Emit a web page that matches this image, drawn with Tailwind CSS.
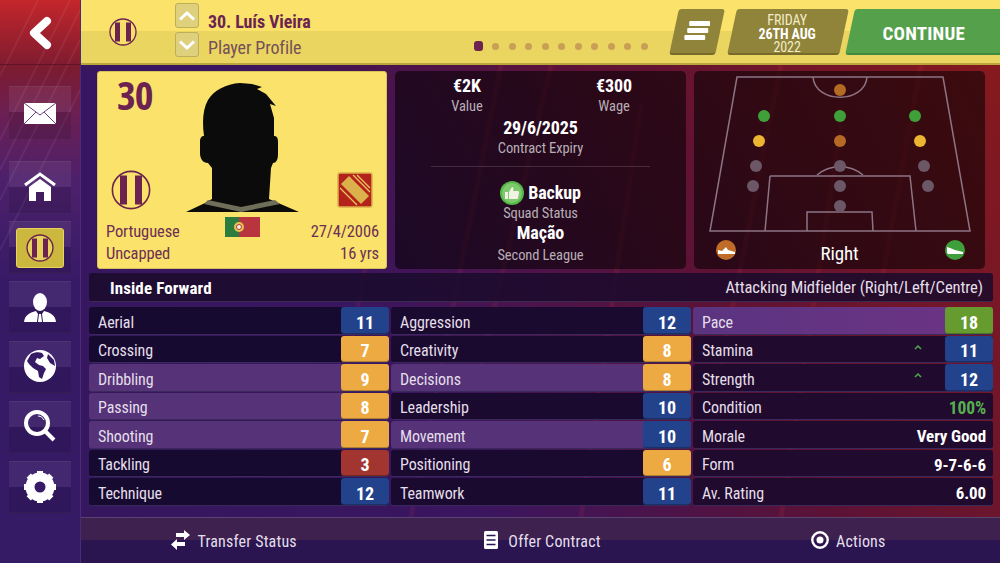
<!DOCTYPE html>
<html lang="en">
<head>
<meta charset="UTF-8">
<title>Player Profile</title>
<script src="https://cdn.jsdelivr.net/npm/@tailwindcss/browser@4"></script>
</head>
<body class="m-0 overflow-hidden">
<div class="relative flex h-[563px] w-[1000px] overflow-hidden bg-[linear-gradient(240deg,#8a1a1c_0%,#5c1236_35%,#3a1560_62%,#33185f_100%)] font-['Roboto_Condensed','Roboto',sans-serif] text-[16px] tracking-[-0.1px] text-[#e4dfe9]">
  <svg class="pointer-events-none absolute left-[81px] top-[65px]" width="919" height="452" fill="none" stroke="#ff4040" stroke-opacity=".09" stroke-width="5"><path d="M420 0 330 452M470 0 400 300M560 40 500 452M700 0 640 300M760 60 700 452M840 0 800 220M300 120 260 330"/></svg>

  <!-- sidebar -->
  <aside class="relative flex w-[81px] shrink-0 flex-col border-r border-[#4b2a7c] bg-[linear-gradient(180deg,#c4262b_0%,#7c1b30_12%,#6c1f52_20%,#4d206c_32%,#371a66_50%,#351a66_100%)]">
    <svg class="pointer-events-none absolute left-0 top-0" width="80" height="260" stroke="#ffffff" stroke-opacity=".06" stroke-width="2"><path d="M80 10 0 170M80 40 0 200M70 0 0 140M80 90 0 250M38 0 0 76"/></svg>
    <div class="relative flex h-[65px] items-center justify-center border-b border-[#5e1426]">
      <svg class="mt-[2px]" width="40" height="46" viewBox="0 0 40 46"><path d="M27 11 14 23 27 35" fill="none" stroke="#fff" stroke-width="8" stroke-linejoin="round" stroke-linecap="round"/></svg>
    </div>
    <nav class="relative mt-[21px] flex flex-col gap-[8px] px-[9px]">
      <div class="mb-[14px] flex h-[53px] items-center justify-center border-t border-b border-t-[#ffffff22] border-b-[#00000040] bg-[linear-gradient(180deg,#ffffff10_50%,#0000001c_50%)] pt-[3px]">
        <svg width="32" height="22" viewBox="0 0 32 22"><rect width="32" height="21" fill="#fff"/><path d="M0 0 16 12 32 0M0 21 12 9M32 21 20 9" fill="none" stroke="#6a3f80" stroke-width="1"/></svg>
      </div>
      <div class="flex h-[52px] items-center justify-center border-t border-b border-t-[#ffffff22] border-b-[#00000040] bg-[linear-gradient(180deg,#ffffff10_50%,#0000001c_50%)]">
        <svg width="32" height="30" viewBox="0 0 32 30"><path d="M1 13 16 2 31 13" fill="none" stroke="#fff" stroke-width="3"/><path d="M5 15 16 7 27 15V29H20V20H12V29H5Z" fill="#fff"/></svg>
      </div>
      <div class="flex h-[52px] items-center justify-center border-t border-b border-t-[#ffffff22] border-b-[#00000040] bg-[linear-gradient(180deg,#ffffff10_50%,#0000001c_50%)] pt-[2px]">
        <div class="flex h-[40px] w-[48px] items-center justify-center rounded-[3px] border border-[#e7d35d] bg-[#cdb83f]">
          <svg width="28" height="28" viewBox="0 0 28 28"><circle cx="14" cy="14" r="13" fill="#e6d35c" stroke="#6d2350" stroke-width="1.400"/><path d="M6 4.500h5v19H6zM17 4.500h5v19h-5z" fill="#6d2350"/></svg>
        </div>
      </div>
      <div class="flex h-[52px] items-center justify-center border-t border-b border-t-[#ffffff22] border-b-[#00000040] bg-[linear-gradient(180deg,#ffffff10_50%,#0000001c_50%)] pt-[2px]">
        <svg width="32" height="30" viewBox="0 0 32 30"><ellipse cx="16" cy="9" rx="7" ry="9" fill="#fff"/><path d="M0 29C1 22 5 20 12 18L14 21 13 29ZM32 29C31 22 27 20 20 18L18 21 19 29ZM15 21H17L18 29H14Z" fill="#fff"/></svg>
      </div>
      <div class="flex h-[52px] items-center justify-center border-t border-b border-t-[#ffffff22] border-b-[#00000040] bg-[linear-gradient(180deg,#ffffff10_50%,#0000001c_50%)] pb-[2px]">
        <svg width="32" height="32" viewBox="0 0 32 32"><circle cx="16" cy="16" r="16" fill="#fff"/><path d="M7 4C11 2 15 2 18 3L20 6 16 9 13 8 11 12 15 15 19 16 22 19 20 23 18 29 15 27 14 21 9 18 5 14 3 11ZM24 4 30 10 31 16 26 13 23 8Z" fill="#371a66"/></svg>
      </div>
      <div class="flex h-[52px] items-center justify-center border-t border-b border-t-[#ffffff22] border-b-[#00000040] bg-[linear-gradient(180deg,#ffffff10_50%,#0000001c_50%)] pb-[2px]">
        <svg width="32" height="32" viewBox="0 0 32 32"><circle cx="13" cy="13" r="11" fill="none" stroke="#fff" stroke-width="4"/><path d="M21 21 30 30" stroke="#fff" stroke-width="4"/><path d="M14 6C17 6 19 8 20 10" fill="none" stroke="#fff" stroke-width="1"/></svg>
      </div>
      <div class="flex h-[52px] items-center justify-center border-t border-b border-t-[#ffffff22] border-b-[#00000040] bg-[linear-gradient(180deg,#ffffff10_50%,#0000001c_50%)]">
        <svg width="32" height="32" viewBox="0 0 32 32"><circle cx="16" cy="16" r="11" fill="none" stroke="#fff" stroke-width="7"/><path d="M16 0V32M0 16H32M4.700 4.700 27.300 27.300M27.300 4.700 4.700 27.300" stroke="#fff" stroke-width="6"/><circle cx="16" cy="16" r="5.500" fill="#371a66"/></svg>
      </div>
    </nav>
  </aside>

  <main class="relative flex min-w-0 flex-1 flex-col">
    <!-- top bar -->
    <header class="relative flex h-[65px] shrink-0 items-start border-b-[2px] border-[#b9a63c] bg-[linear-gradient(180deg,#fae26b_50%,#e9d55f_50%)]">
      <div class="ml-[28px] mt-[18px]">
        <svg width="28" height="28" viewBox="0 0 28 28"><circle cx="14" cy="14" r="13" fill="#f7e06a" stroke="#6d2350" stroke-width="1.300"/><path d="M6 4.500h5v19H6zM17 4.500h5v19h-5z" fill="#6d2350"/></svg>
      </div>
      <div class="ml-[38px] mt-[3px] flex flex-col gap-[4px]">
        <div class="flex h-[25px] w-[24px] items-center justify-center rounded-[3px] border border-[#bdae5a] bg-[#dfd07e]">
          <svg width="18" height="12" viewBox="0 0 18 12"><path d="M2 9.500 9 3l7 6.500" fill="none" stroke="#fff" stroke-width="3"/></svg>
        </div>
        <div class="flex h-[25px] w-[24px] items-center justify-center rounded-[3px] border border-[#bdae5a] bg-[#dfd07e]">
          <svg width="18" height="12" viewBox="0 0 18 12"><path d="M2 2.500 9 9l7-6.500" fill="none" stroke="#fff" stroke-width="3"/></svg>
        </div>
      </div>
      <div class="ml-[9px] mt-[11px] flex flex-col">
        <span class="text-[18px] font-bold leading-[22px] text-[#6a2450]">30. Luís Vieira</span>
        <span class="mt-[4px] text-[18px] leading-[22px] text-[#75505a]">Player Profile</span>
      </div>
      <div class="absolute left-[393px] top-[41px] flex items-center">
        <span class="h-[10px] w-[9px] rounded-[3px] bg-[#6d2350]"></span>
        <span class="ml-[9px] h-[7px] w-[7px] rounded-full bg-[#c99f57]"></span>
        <span class="ml-[9.500px] h-[7px] w-[7px] rounded-full bg-[#c99f57]"></span>
        <span class="ml-[9.500px] h-[7px] w-[7px] rounded-full bg-[#c99f57]"></span>
        <span class="ml-[9.500px] h-[7px] w-[7px] rounded-full bg-[#c99f57]"></span>
        <span class="ml-[9.500px] h-[7px] w-[7px] rounded-full bg-[#c99f57]"></span>
        <span class="ml-[9.500px] h-[7px] w-[7px] rounded-full bg-[#c99f57]"></span>
        <span class="ml-[9.500px] h-[7px] w-[7px] rounded-full bg-[#c99f57]"></span>
        <span class="ml-[9.500px] h-[7px] w-[7px] rounded-full bg-[#c99f57]"></span>
        <span class="ml-[9.500px] h-[7px] w-[7px] rounded-full bg-[#c99f57]"></span>
        <span class="ml-[9.500px] h-[7px] w-[7px] rounded-full bg-[#c99f57]"></span>
      </div>
      <div class="-mr-[10px] ml-auto mt-[9px] flex h-[46px] items-stretch">
        <div class="flex w-[46px] -skew-x-12 items-center justify-center rounded-[3px] border-b-2 border-[#76692a] bg-[#90833a]">
          <svg class="skew-x-12" width="26" height="22" viewBox="0 0 26 22" fill="#fff"><rect x="5" y="1" width="21" height="5" rx="1"/><rect x="3" y="8" width="21" height="5" rx="1"/><rect x="0" y="15" width="21" height="5" rx="1"/></svg>
        </div>
        <div class="ml-[12px] flex w-[112px] -skew-x-12 items-center justify-center rounded-[3px] border-b-2 border-[#76692a] bg-[#90833a] pt-[6px]">
          <div class="skew-x-12 text-center text-[14px] leading-[13.500px] text-[#f2edc8]">
            <div>FRIDAY</div>
            <div class="font-bold text-white">26TH AUG</div>
            <div>2022</div>
          </div>
        </div>
        <div class="ml-[6px] flex w-[160px] -skew-x-12 items-center justify-center rounded-[3px] border-b-2 border-[#3f8a3e] bg-[#55a04b] pr-[12px] pt-[6px]">
          <span class="skew-x-12 text-[19px] font-bold tracking-[0.2px] text-white">CONTINUE</span>
        </div>
      </div>
    </header>

    <!-- top panels -->
    <section class="ml-[16px] mt-[6px] flex h-[198px] shrink-0 gap-[8px]">
      <!-- player card -->
      <div class="relative flex w-[290px] flex-col justify-end rounded-[3px] border border-[#d4c25a] bg-[#fae26b] pb-[4px] pl-[8px] pr-[7px] text-[#6d2f55]">
        <span class="absolute left-[19px] top-[1px] font-['Open_Sans',sans-serif] text-[40px] font-bold font-stretch-[75%] leading-[44px] tracking-[-1px] text-[#6d2350]">30</span>
        <svg class="absolute left-[88px] top-[9px]" width="114" height="132" viewBox="186 80 114 132"><path d="M186 211 205 202 212 198V167L208 162C203 162 200 158 200 152V141C200 136 202 135 204 135 202 120 203 108 208 99 214 89 226 83 240 82L252 83 262 86 257 88 266 93 276 105 270 103 274 117 274 135C277 135 278 137 278 141V153C278 159 276 162 273 162L271 167 269 198 299 211Z" fill="#0b0b0b"/><path d="M204 203 208 199 241 206 275 199 280 203 241 211Z" fill="#6f6e58"/></svg>
        <svg class="absolute left-[13px] top-[98px]" width="40" height="40" viewBox="0 0 40 40"><circle cx="20" cy="20" r="18.600" fill="#fae26b" stroke="#6d2350" stroke-width="1.600"/><path d="M9 5.500h7v29H9zM24 5.500h7v29h-7z" fill="#6d2350"/></svg>
        <svg class="absolute left-[239px] top-[100px]" width="36" height="36" viewBox="0 0 36 36"><rect x="1" y="1" width="34" height="34" rx="2" fill="#b3231c" stroke="#dcb04a" stroke-width="1.500"/><path d="M4 12 12 4 32 24 24 32Z" fill="#dcb04a"/><path d="M16 3 33 20M20 3 33 16M3 16 20 33" stroke="#f0c860" stroke-width="1.200"/></svg>
        <div class="flex items-start justify-between">
          <div class="text-[16.500px] leading-[21.500px]"><div>Portuguese</div><div>Uncapped</div></div>
          <svg class="-mt-[4px] mr-[5px]" width="35" height="20" viewBox="0 0 35 20"><rect width="35" height="20" fill="#b8343f"/><rect width="14" height="20" fill="#2c7c3f"/><circle cx="14" cy="10" r="5" fill="#e3c54e"/><circle cx="14" cy="10" r="2.500" fill="#f3f0e8" stroke="#b8343f"/></svg>
          <div class="text-right text-[16.500px] leading-[21.500px]"><div>27/4/2006</div><div>16 yrs</div></div>
        </div>
      </div>
      <!-- contract panel -->
      <div class="flex w-[291px] flex-col items-center rounded-[5px] bg-black/55 pt-[4px] text-center text-[14.500px] leading-[21px] text-[#b9aeb7]">
        <div class="flex w-full justify-between px-[22px]">
          <div class="w-[100px]"><div class="text-[18px] font-bold text-white">€2K</div><div>Value</div></div>
          <div class="w-[100px]"><div class="text-[18px] font-bold text-white">€300</div><div>Wage</div></div>
        </div>
        <div class="text-[18px] font-bold text-white">29/6/2025</div>
        <div>Contract Expiry</div>
        <div class="mb-[15px] mt-[7px] h-px w-[219px] bg-[#ffffff26]"></div>
        <div class="flex h-[21px] items-center gap-[4px] text-[18px] font-bold text-white">
          <svg width="24" height="24" viewBox="0 0 24 24"><circle cx="12" cy="12" r="12" fill="#54b848"/><circle cx="12" cy="12" r="10" fill="#7ec96e"/><path d="M5 11h3v7H5zM9 11l3-5c1 0 2 1 1 4h5c1 0 1 1 1 2l-1 5c0 1-1 1-2 1H9z" fill="#f2f2e4"/></svg>
          <span>Backup</span>
        </div>
        <div>Squad Status</div>
        <div class="-mt-[2px] mb-[2px] text-[18px] font-bold text-white">Mação</div>
        <div>Second League</div>
      </div>
      <!-- position panel -->
      <div class="relative flex w-[291px] flex-col items-center justify-end rounded-[5px] bg-black/55 pb-[3px]">
        <svg class="absolute left-0 top-0" width="291" height="198" viewBox="694 71 291 198">
          <g fill="none" stroke="#8d7484" stroke-width="1.500">
            <path d="M737 77H943L970 231H710Z"/>
            <path d="M770 176H910L916 231M770 176 765 231M807 231V212H872L873 231"/>
            <path d="M813 77C815 104 865 104 867 77M817 175C830 164 850 164 863 175"/>
          </g>
          <g fill="#3fa03a"><circle cx="764" cy="116" r="6"/><circle cx="840" cy="116" r="6"/><circle cx="915" cy="116" r="6"/></g>
          <g fill="#ecb532"><circle cx="759" cy="141" r="6"/><circle cx="920" cy="141" r="6"/></g>
          <g fill="#b56a24"><circle cx="840" cy="90" r="6"/><circle cx="840" cy="141" r="6"/></g>
          <g fill="#6b5765"><circle cx="756" cy="166" r="6"/><circle cx="840" cy="166" r="6"/><circle cx="924" cy="166" r="6"/><circle cx="753" cy="186" r="6"/><circle cx="840" cy="186" r="6"/><circle cx="928" cy="186" r="6"/><circle cx="840" cy="206" r="6"/></g>
          <circle cx="726" cy="250" r="10" fill="#bf6c28"/><path d="M718 254V250L722 251 726 247 728 250 735 252V254Z" fill="#fff"/>
          <circle cx="955" cy="250" r="10" fill="#3f9f3a"/><path d="M947 253V247L950 248 955 250 963 252V254H948Z" fill="#fff"/>
        </svg>
        <span class="relative text-[19px] leading-[24px] text-white">Right</span>
      </div>
    </section>

    <!-- role bar -->
    <div class="ml-[8px] mr-[7px] mt-[4px] flex h-[29px] shrink-0 items-center justify-between rounded-[3px] border-b border-[#3a2a50] bg-[#1a0a2c]/85 pl-[21px] pr-[10px] pt-[3px]">
      <span class="text-[17px] font-bold tracking-[0.1px] text-white">Inside Forward</span>
      <span class="text-[16.600px]">Attacking Midfielder (Right/Left/Centre)</span>
    </div>

    <!-- attributes -->
    <section class="ml-[8px] mr-[7px] mt-[5px] grid h-[199px] shrink-0 grid-cols-3 gap-x-[2px]">
      <div class="flex flex-col gap-[1px]">
        <div class="flex h-[27.500px] items-center justify-between rounded-[3px] border-b border-[#3a2a5c] bg-[#170a30] pl-[9px]"><span class="pt-[5px]">Aerial</span><span class="flex h-full w-[48px] items-center justify-center rounded-[3px] bg-[#22428c] pt-[4px] text-[18px] font-bold text-white shadow-[inset_0_-1px_0_#00000040]">11</span></div>
        <div class="flex h-[27.500px] items-center justify-between rounded-[3px] border-b border-[#3a2a5c] bg-[#170a30] pl-[9px]"><span class="pt-[5px]">Crossing</span><span class="flex h-full w-[48px] items-center justify-center rounded-[3px] bg-[#edaa42] pt-[4px] text-[18px] font-bold text-white shadow-[inset_0_-1px_0_#00000040]">7</span></div>
        <div class="flex h-[27.500px] items-center justify-between rounded-[3px] border-b border-[#3a2a5c] bg-[#563278] pl-[9px]"><span class="pt-[5px]">Dribbling</span><span class="flex h-full w-[48px] items-center justify-center rounded-[3px] bg-[#edaa42] pt-[4px] text-[18px] font-bold text-white shadow-[inset_0_-1px_0_#00000040]">9</span></div>
        <div class="flex h-[27.500px] items-center justify-between rounded-[3px] border-b border-[#3a2a5c] bg-[#563278] pl-[9px]"><span class="pt-[5px]">Passing</span><span class="flex h-full w-[48px] items-center justify-center rounded-[3px] bg-[#edaa42] pt-[4px] text-[18px] font-bold text-white shadow-[inset_0_-1px_0_#00000040]">8</span></div>
        <div class="flex h-[27.500px] items-center justify-between rounded-[3px] border-b border-[#3a2a5c] bg-[#563278] pl-[9px]"><span class="pt-[5px]">Shooting</span><span class="flex h-full w-[48px] items-center justify-center rounded-[3px] bg-[#edaa42] pt-[4px] text-[18px] font-bold text-white shadow-[inset_0_-1px_0_#00000040]">7</span></div>
        <div class="flex h-[27.500px] items-center justify-between rounded-[3px] border-b border-[#3a2a5c] bg-[#170a30] pl-[9px]"><span class="pt-[5px]">Tackling</span><span class="flex h-full w-[48px] items-center justify-center rounded-[3px] bg-[#a2352f] pt-[4px] text-[18px] font-bold text-white shadow-[inset_0_-1px_0_#00000040]">3</span></div>
        <div class="flex h-[27.500px] items-center justify-between rounded-[3px] border-b border-[#3a2a5c] bg-[#170a30] pl-[9px]"><span class="pt-[5px]">Technique</span><span class="flex h-full w-[48px] items-center justify-center rounded-[3px] bg-[#22428c] pt-[4px] text-[18px] font-bold text-white shadow-[inset_0_-1px_0_#00000040]">12</span></div>
      </div>
      <div class="flex flex-col gap-[1px]">
        <div class="flex h-[27.500px] items-center justify-between rounded-[3px] border-b border-[#3a2a5c] bg-[#1a0a30] pl-[9px]"><span class="pt-[5px]">Aggression</span><span class="flex h-full w-[48px] items-center justify-center rounded-[3px] bg-[#22428c] pt-[4px] text-[18px] font-bold text-white shadow-[inset_0_-1px_0_#00000040]">12</span></div>
        <div class="flex h-[27.500px] items-center justify-between rounded-[3px] border-b border-[#3a2a5c] bg-[#1a0a30] pl-[9px]"><span class="pt-[5px]">Creativity</span><span class="flex h-full w-[48px] items-center justify-center rounded-[3px] bg-[#edaa42] pt-[4px] text-[18px] font-bold text-white shadow-[inset_0_-1px_0_#00000040]">8</span></div>
        <div class="flex h-[27.500px] items-center justify-between rounded-[3px] border-b border-[#3a2a5c] bg-[#563278] pl-[9px]"><span class="pt-[5px]">Decisions</span><span class="flex h-full w-[48px] items-center justify-center rounded-[3px] bg-[#edaa42] pt-[4px] text-[18px] font-bold text-white shadow-[inset_0_-1px_0_#00000040]">8</span></div>
        <div class="flex h-[27.500px] items-center justify-between rounded-[3px] border-b border-[#3a2a5c] bg-[#1a0a30] pl-[9px]"><span class="pt-[5px]">Leadership</span><span class="flex h-full w-[48px] items-center justify-center rounded-[3px] bg-[#22428c] pt-[4px] text-[18px] font-bold text-white shadow-[inset_0_-1px_0_#00000040]">10</span></div>
        <div class="flex h-[27.500px] items-center justify-between rounded-[3px] border-b border-[#3a2a5c] bg-[#563278] pl-[9px]"><span class="pt-[5px]">Movement</span><span class="flex h-full w-[48px] items-center justify-center rounded-[3px] bg-[#22428c] pt-[4px] text-[18px] font-bold text-white shadow-[inset_0_-1px_0_#00000040]">10</span></div>
        <div class="flex h-[27.500px] items-center justify-between rounded-[3px] border-b border-[#3a2a5c] bg-[#1a0a30] pl-[9px]"><span class="pt-[5px]">Positioning</span><span class="flex h-full w-[48px] items-center justify-center rounded-[3px] bg-[#edaa42] pt-[4px] text-[18px] font-bold text-white shadow-[inset_0_-1px_0_#00000040]">6</span></div>
        <div class="flex h-[27.500px] items-center justify-between rounded-[3px] border-b border-[#3a2a5c] bg-[#1a0a30] pl-[9px]"><span class="pt-[5px]">Teamwork</span><span class="flex h-full w-[48px] items-center justify-center rounded-[3px] bg-[#22428c] pt-[4px] text-[18px] font-bold text-white shadow-[inset_0_-1px_0_#00000040]">11</span></div>
      </div>
      <div class="flex flex-col gap-[1px]">
        <div class="flex h-[27.500px] items-center justify-between rounded-[3px] border-b border-[#3a2a5c] bg-[linear-gradient(90deg,#5a3480,#6e3384)] pl-[9px]"><span class="pt-[5px]">Pace</span><span class="flex h-full w-[48px] items-center justify-center rounded-[3px] bg-[#659b2f] pt-[4px] text-[18px] font-bold text-white shadow-[inset_0_-1px_0_#00000040]">18</span></div>
        <div class="flex h-[27.500px] items-center rounded-[3px] border-b border-[#3a2a5c] bg-[#200a2e] pl-[9px]"><span class="pt-[5px]">Stamina</span><svg class="-mt-[4px] ml-auto mr-[23px]" width="8" height="6" viewBox="0 0 8 6"><path d="M1 5 4 2l3 3" fill="none" stroke="#4fa84a" stroke-width="1.500"/></svg><span class="flex h-full w-[48px] items-center justify-center rounded-[3px] bg-[#22428c] pt-[4px] text-[18px] font-bold text-white shadow-[inset_0_-1px_0_#00000040]">11</span></div>
        <div class="flex h-[27.500px] items-center rounded-[3px] border-b border-[#3a2a5c] bg-[#200a2e] pl-[9px]"><span class="pt-[5px]">Strength</span><svg class="-mt-[4px] ml-auto mr-[23px]" width="8" height="6" viewBox="0 0 8 6"><path d="M1 5 4 2l3 3" fill="none" stroke="#4fa84a" stroke-width="1.500"/></svg><span class="flex h-full w-[48px] items-center justify-center rounded-[3px] bg-[#22428c] pt-[4px] text-[18px] font-bold text-white shadow-[inset_0_-1px_0_#00000040]">12</span></div>
        <div class="flex h-[27.500px] items-center justify-between rounded-[3px] border-b border-[#3a2a5c] bg-[#200a2e] pl-[9px] pr-[7px]"><span class="pt-[5px]">Condition</span><span class="pt-[5px] text-[17.500px] font-bold text-[#57b04e]">100%</span></div>
        <div class="flex h-[27.500px] items-center justify-between rounded-[3px] border-b border-[#3a2a5c] bg-[#200a2e] pl-[9px] pr-[7px]"><span class="pt-[5px]">Morale</span><span class="pt-[5px] text-[17px] font-bold text-white">Very Good</span></div>
        <div class="flex h-[27.500px] items-center justify-between rounded-[3px] border-b border-[#3a2a5c] bg-[#200a2e] pl-[9px] pr-[7px]"><span class="pt-[5px]">Form</span><span class="pt-[5px] text-[17px] font-bold text-white">9-7-6-6</span></div>
        <div class="flex h-[27.500px] items-center justify-between rounded-[3px] border-b border-[#3a2a5c] bg-[#200a2e] pl-[9px] pr-[7px]"><span class="pt-[5px]">Av. Rating</span><span class="pt-[5px] text-[17px] font-bold text-white">6.00</span></div>
      </div>
    </section>

    <!-- bottom actions -->
    <footer class="mt-auto grid h-[46px] shrink-0 grid-cols-3 border-t border-[#5a4470] bg-[linear-gradient(180deg,#3f2150_50%,#2a1550_50%)] tracking-[0.2px]">
      <div class="flex items-center justify-center gap-[7px] pt-[3px]">
        <svg class="-mt-[4px]" width="19" height="20" viewBox="0 0 19 20" fill="#fff"><path d="M5 7H13V10L19 5 13 0V3H5ZM14 12H6V9L0 14.500 6 20V16H14Z"/></svg>
        <span>Transfer Status</span>
      </div>
      <div class="flex items-center justify-center gap-[10px] pl-[4px] pt-[3px]">
        <svg class="-mt-[4px]" width="14" height="18" viewBox="0 0 14 18"><rect width="14" height="18" rx="1.500" fill="#fff"/><path d="M2.500 4.500H11.500M2.500 9H11.500M2.500 13.500H11.500" stroke="#2a1550" stroke-width="1.500"/></svg>
        <span>Offer Contract</span>
      </div>
      <div class="flex items-center justify-center gap-[7px] pl-[3px] pt-[3px]">
        <svg class="-mt-[4px]" width="18" height="18" viewBox="0 0 18 18"><circle cx="9" cy="9" r="7.700" fill="none" stroke="#fff" stroke-width="2.400"/><circle cx="9" cy="9" r="3.500" fill="#fff"/></svg>
        <span>Actions</span>
      </div>
    </footer>
  </main>
</div>
</body>
</html>
